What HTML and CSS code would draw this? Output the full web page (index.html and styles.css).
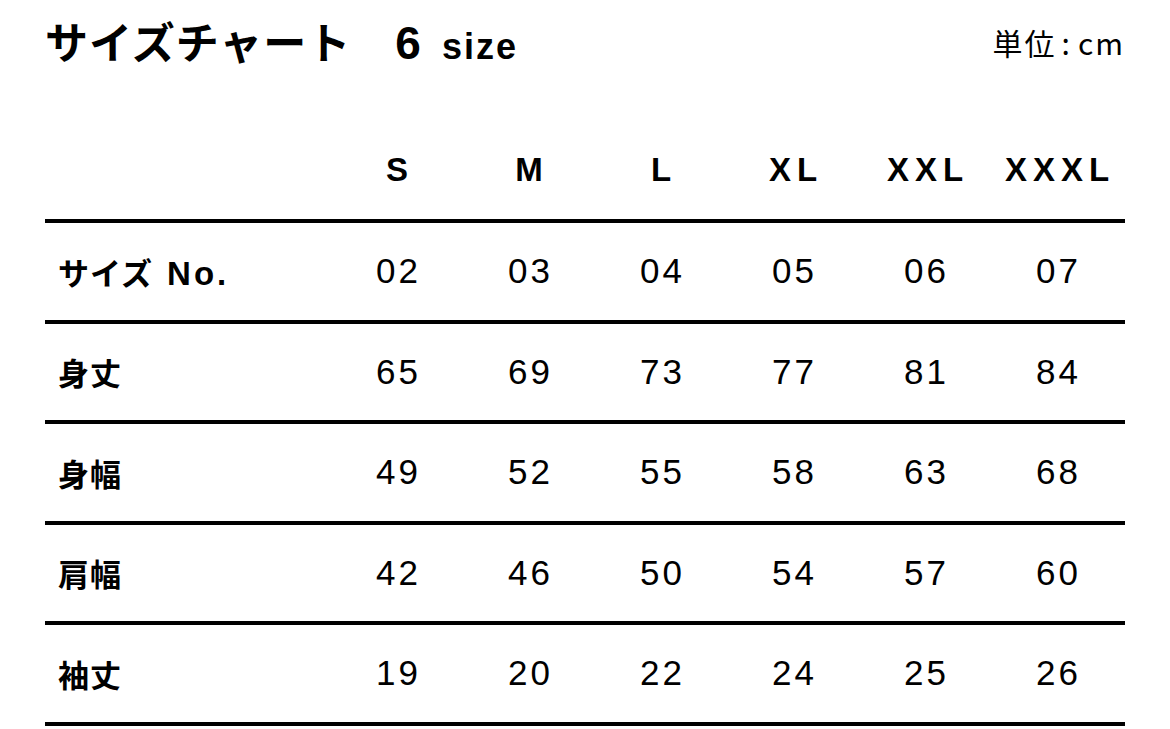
FILE: index.html
```html
<!DOCTYPE html>
<html lang="ja">
<head>
<meta charset="utf-8">
<title>サイズチャート</title>
<link rel="stylesheet" href="styles.css">
</head>
<body>
<div class="page">
  <div class="title-row">
    <h1 class="title"><span class="title-jp">サイズチャート</span><span class="title-count">6</span><span class="title-size">size</span></h1>
    <div class="unit">単位<span class="colon">:</span>cm</div>
  </div>
  <div class="chart">
    <div class="row head">
      <div class="label"></div>
      <div class="cell">S</div>
      <div class="cell">M</div>
      <div class="cell">L</div>
      <div class="cell">XL</div>
      <div class="cell">XXL</div>
      <div class="cell">XXXL</div>
    </div>
    <div class="row">
      <div class="label">サイズ<span class="latin">No.</span></div>
      <div class="cell">02</div><div class="cell">03</div><div class="cell">04</div><div class="cell">05</div><div class="cell">06</div><div class="cell">07</div>
    </div>
    <div class="row">
      <div class="label">身丈</div>
      <div class="cell">65</div><div class="cell">69</div><div class="cell">73</div><div class="cell">77</div><div class="cell">81</div><div class="cell">84</div>
    </div>
    <div class="row">
      <div class="label">身幅</div>
      <div class="cell">49</div><div class="cell">52</div><div class="cell">55</div><div class="cell">58</div><div class="cell">63</div><div class="cell">68</div>
    </div>
    <div class="row">
      <div class="label">肩幅</div>
      <div class="cell">42</div><div class="cell">46</div><div class="cell">50</div><div class="cell">54</div><div class="cell">57</div><div class="cell">60</div>
    </div>
    <div class="row">
      <div class="label">袖丈</div>
      <div class="cell">19</div><div class="cell">20</div><div class="cell">22</div><div class="cell">24</div><div class="cell">25</div><div class="cell">26</div>
    </div>
  </div>
</div>
</body>
</html>
```
FILE: styles.css
```css
html, body {
  margin: 0;
  padding: 0;
  background: #ffffff;
}

body {
  color: #000000;
  font-family: "Liberation Sans", "Noto Sans CJK JP", sans-serif;
}

.page {
  width: 1080px;
  padding: 0 45px;
}

.title-row {
  display: flex;
  justify-content: space-between;
  align-items: flex-start;
  height: 120px;
}

.title {
  margin: 0;
  padding-top: 10px;
  font-weight: 700;
  line-height: 60px;
  display: flex;
  align-items: baseline;
}

.title-jp {
  font-family: "Noto Sans CJK JP", sans-serif;
  font-size: 43px;
  letter-spacing: 1px;
}

.title-count {
  font-family: "Liberation Sans", sans-serif;
  font-size: 46px;
  margin-left: 44px;
}

.title-size {
  font-family: "Liberation Sans", sans-serif;
  font-size: 36px;
  letter-spacing: 2px;
  margin-left: 21px;
}

.unit {
  font-family: "Noto Sans CJK JP", sans-serif;
  font-size: 30px;
  line-height: 40px;
  padding-top: 22px;
  letter-spacing: 2px;
}

.unit .colon {
  margin: 0 6px 0 5px;
}

.chart {
  display: flex;
  flex-direction: column;
}

.row {
  display: grid;
  grid-template-columns: 288px repeat(6, 132px);
  align-items: center;
  height: 96.5px;
  border-bottom: 4px solid #000000;
}

.row.head {
  height: 99px;
}

.label {
  padding-left: 13px;
  font-family: "Noto Sans CJK JP", sans-serif;
  font-weight: 700;
  font-size: 31px;
  letter-spacing: 1px;
}

.label .latin {
  font-family: "Liberation Sans", sans-serif;
  font-size: 33px;
  letter-spacing: 3px;
  margin-left: 14px;
}

.cell {
  text-align: center;
  font-size: 35px;
  letter-spacing: 3px;
  padding-left: 3px;
  transform: translateX(-2px);
}

.head .cell {
  font-weight: 700;
  font-size: 33px;
  letter-spacing: 6px;
  padding-left: 6px;
}
```
